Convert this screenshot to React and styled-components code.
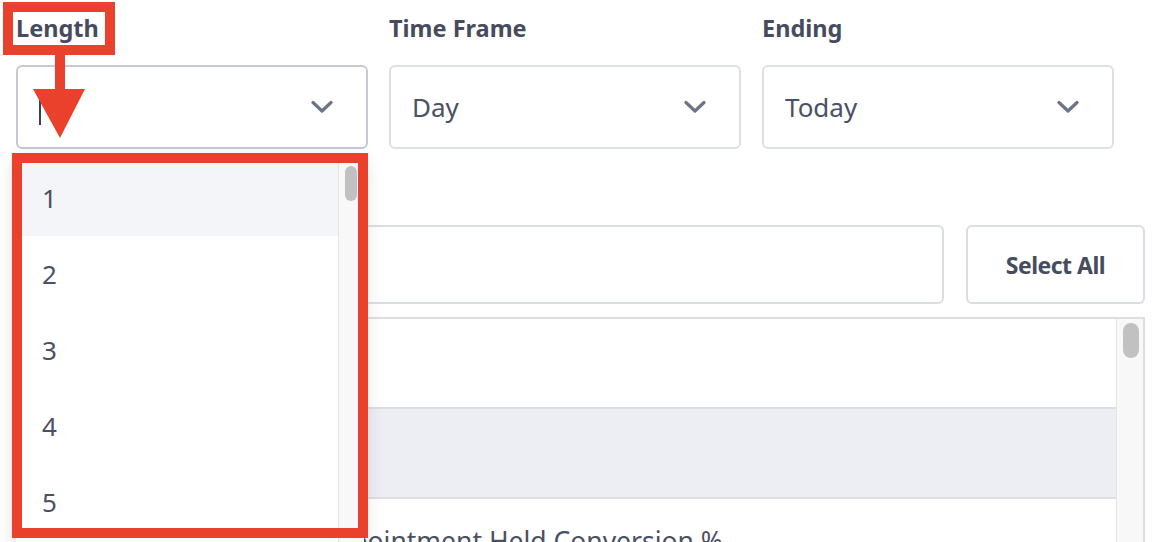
import styled, { createGlobalStyle } from 'styled-components';

const GlobalStyle = createGlobalStyle`
    html, body {
        margin: 0;
        padding: 0;
        background: #FFFFFF;
        overflow: hidden;
    }
    body {
        font-family: "Noto Sans", "Open Sans", Arial, sans-serif;
        color: #464b5e;
    }
`;

const filters = [
    { label: 'Length', value: '', focused: true },
    { label: 'Time Frame', value: 'Day' },
    { label: 'Ending', value: 'Today' },
];

const options = ['1', '2', '3', '4', '5'];

const rows = [
    { text: '' },
    { text: '', shaded: true },
    { text: 'Appointment Held Conversion %' },
];

function Chevron() {
    return (
        <svg width="22" height="14" viewBox="0 0 22 14" fill="none">
            <path d="M2 2.5L11 11L20 2.5" stroke="#6e7385" strokeWidth="3.2" strokeLinecap="round" strokeLinejoin="round" />
        </svg>
    );
}

export default function App() {
    return (
        <>
            <GlobalStyle />
            <Page>
                <FilterRow>
                    {filters.map((f) => (
                        <Field key={f.label}>
                            <Label>{f.label}</Label>
                            <SelectBox focused={f.focused}>
                                <Value>
                                    {f.focused && <Caret />}
                                    {f.value}
                                </Value>
                                <Chevron />
                            </SelectBox>
                        </Field>
                    ))}
                </FilterRow>

                <SearchRow>
                    <SearchInput />
                    <SelectAllButton>Select All</SelectAllButton>
                </SearchRow>

                <ListBox>
                    <Rows>
                        {rows.map((r, i) => (
                            <Row key={i} shaded={r.shaded}>
                                <RowText>{r.text}</RowText>
                            </Row>
                        ))}
                    </Rows>
                    <Track wide>
                        <Thumb wide />
                    </Track>
                </ListBox>

                <Menu>
                    <OptionList>
                        {options.map((o, i) => (
                            <Option key={o} active={i === 0}>{o}</Option>
                        ))}
                    </OptionList>
                    <Track>
                        <Thumb />
                    </Track>
                </Menu>

                <MarkLabel />
                <MarkMenu />
                <Arrow width="60" height="90" viewBox="0 0 60 90">
                    <rect x="25" y="4" width="10" height="38" fill="#e9412b" />
                    <polygon points="3,39 55,39 30,88" fill="#e9412b" />
                </Arrow>
            </Page>
        </>
    );
}

const Page = styled.div`
    position: relative;
    height: 542px;
    box-sizing: border-box;
    padding: 13px 19px 0 16px;
`;

const FilterRow = styled.div`
    display: grid;
    grid-template-columns: repeat(3, 352px);
    column-gap: 21px;
`;

const Field = styled.div`
    display: flex;
    flex-direction: column;
`;

const Label = styled.div`
    font-size: 23.5px;
    font-weight: 700;
    line-height: 30px;
    color: #464b5e;
`;

const SelectBox = styled.div`
    margin-top: 22px;
    height: 84px;
    box-sizing: border-box;
    border: 2px solid ${props => props.focused ? '#c6c9d3' : '#dcdfe5'};
    border-radius: 6px;
    display: flex;
    align-items: center;
    justify-content: space-between;
    padding: 0 33px 0 21px;
`;

const Value = styled.div`
    display: flex;
    align-items: center;
    font-size: 26px;
    color: #4b5063;
`;

const Caret = styled.span`
    display: block;
    width: 2px;
    height: 36px;
    background: #3b3f4f;
`;

const SearchRow = styled.div`
    display: flex;
    gap: 22px;
    margin-top: 76px;
`;

const SearchInput = styled.div`
    flex: 1;
    height: 79px;
    box-sizing: border-box;
    border: 2px solid #dadde3;
    border-radius: 6px;
`;

const SelectAllButton = styled.button`
    width: 179px;
    height: 79px;
    box-sizing: border-box;
    border: 2px solid #dadde3;
    border-radius: 6px;
    background: #FFFFFF;
    font-family: "Noto Sans", Arial, sans-serif;
    font-size: 23px;
    font-weight: 700;
    letter-spacing: -0.5px;
    color: #464b5e;
`;

const ListBox = styled.div`
    margin-top: 13px;
    height: 240px;
    border: 2px solid #dcdee4;
    border-bottom: none;
    display: flex;
`;

const Rows = styled.div`
    flex: 1;
    display: flex;
    flex-direction: column;
`;

const Row = styled.div`
    height: 90px;
    flex-shrink: 0;
    box-sizing: border-box;
    border-bottom: 2px solid #dcdee4;
    background: ${props => props.shaded ? '#edeef3' : '#FFFFFF'};
    display: flex;
    align-items: center;
    padding: 0 0 4px 300px;
`;

const RowText = styled.span`
    font-size: 26.5px;
    color: #4b5063;
`;

const Track = styled.div`
    width: ${props => props.wide ? '27px' : '26px'};
    flex-shrink: 0;
    border-left: 1px solid #e4e4e6;
    background: #f8f8f8;
    padding-top: ${props => props.wide ? '4px' : '10px'};
    box-sizing: border-box;
`;

const Thumb = styled.div`
    width: ${props => props.wide ? '16px' : '12px'};
    height: 35px;
    margin-left: 6px;
    border-radius: 8px;
    background: #c1c1c1;
`;

const Menu = styled.div`
    position: absolute;
    left: 16px;
    top: 156px;
    width: 348px;
    height: 400px;
    background: #FFFFFF;
    box-shadow: 0 4px 18px rgba(0, 0, 0, 0.16);
    display: flex;
`;

const OptionList = styled.div`
    flex: 1;
    padding-top: 4px;
`;

const Option = styled.div`
    height: 76px;
    display: flex;
    align-items: center;
    padding-left: 26px;
    font-size: 26px;
    color: #4b5063;
    background: ${props => props.active ? '#f4f5f9' : '#FFFFFF'};
`;

const MarkLabel = styled.div`
    position: absolute;
    left: 3px;
    top: 2px;
    width: 112px;
    height: 53px;
    box-sizing: border-box;
    border: 10px solid #e9412b;
`;

const MarkMenu = styled.div`
    position: absolute;
    left: 12px;
    top: 153px;
    width: 356px;
    height: 385px;
    box-sizing: border-box;
    border: 10px solid #e9412b;
`;

const Arrow = styled.svg`
    position: absolute;
    left: 30px;
    top: 50px;
`;
